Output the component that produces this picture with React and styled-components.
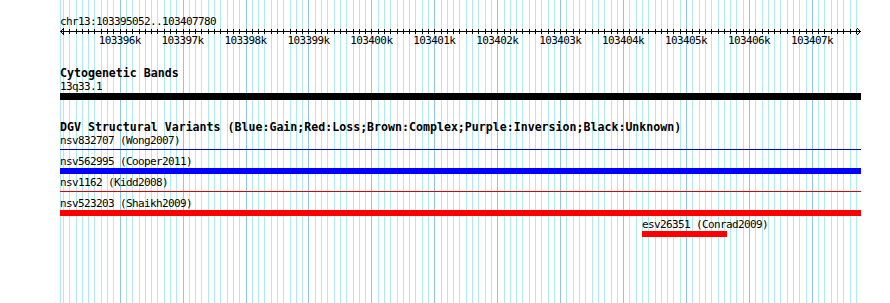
import React from 'react';
import styled, { createGlobalStyle } from 'styled-components';

const START = 103395052;
const END = 103407780;
const LEFT = 60;
const SPAN = 801;
const scale = SPAN / (END - START);
const offset = pos => (pos - START) * scale;

const GlobalStyle = createGlobalStyle`
  html, body {
    margin: 0;
    padding: 0;
    background: #fff;
  }
`;

const Panel = styled.div`
  position: relative;
  width: 890px;
  height: 303px;
  overflow: hidden;
  background: #fff;
`;

const GridLayer = styled.svg`
  position: absolute;
  top: 0;
  left: 0;
`;

const Content = styled.div`
  position: relative;
  display: flex;
  flex-direction: column;
  padding: 15px 0 0 ${LEFT}px;
  width: ${SPAN}px;
`;

const Label = styled.div`
  font-family: "DejaVu Sans Mono", "Liberation Mono", monospace;
  font-size: 11px;
  letter-spacing: -0.62px;
  height: 13px;
  line-height: 13px;
  color: #000;
  white-space: nowrap;
`;

const TrackTitle = styled.div`
  font-family: "DejaVu Sans Mono", "Liberation Mono", monospace;
  font-weight: bold;
  font-size: 11.6px;
  height: 13px;
  line-height: 13px;
  color: #000;
  white-space: nowrap;
`;

const RulerSvg = styled.svg`
  display: block;
  overflow: visible;
`;

const TickLabel = styled.text`
  font-family: "DejaVu Sans Mono", "Liberation Mono", monospace;
  font-size: 11px;
  letter-spacing: -0.62px;
  fill: #000;
`;

const Track = styled.section`
  display: flex;
  flex-direction: column;
  gap: 2px;
  margin-top: ${p => p.$gap}px;
`;

const Heading = styled.div`
  margin-bottom: -2px;
`;

const Row = styled.div`
  display: flex;
  flex-direction: column;
`;

const Glyph = styled.div`
  flex: none;
  background: ${p => p.$color};
  height: ${p => (p.$kind === 'line' ? 1 : p.$h)}px;
  margin-top: ${p => (p.$kind === 'line' ? 2 : 0)}px;
  margin-bottom: ${p => (p.$kind === 'line' ? 3 : 0)}px;
`;

const tracks = [
  {
    title: 'Cytogenetic Bands',
    gap: 19,
    features: [
      { name: '13q33.1', start: START, end: END, color: '#000', kind: 'bar', h: 7 },
    ],
  },
  {
    title: 'DGV Structural Variants (Blue:Gain;Red:Loss;Brown:Complex;Purple:Inversion;Black:Unknown)',
    gap: 21,
    features: [
      { name: 'nsv832707 (Wong2007)', start: START, end: END, color: '#0000c8', kind: 'line' },
      { name: 'nsv562995 (Cooper2011)', start: START, end: END, color: '#0000ff', kind: 'bar', h: 6 },
      { name: 'nsv1162 (Kidd2008)', start: START, end: END, color: '#d80000', kind: 'line' },
      { name: 'nsv523203 (Shaikh2009)', start: START, end: END, color: '#ff0000', kind: 'bar', h: 6 },
      { name: 'esv26351 (Conrad2009)', start: 103404300, end: 103405650, color: '#ff0000', kind: 'bar', h: 6 },
    ],
  },
];

function hundreds() {
  const out = [];
  for (let p = Math.ceil(START / 100) * 100; p <= END; p += 100) out.push(p);
  return out;
}

function Grid() {
  const lines = hundreds();
  return (
    <GridLayer width="890" height="303">
      <line x1={LEFT + 0.5} x2={LEFT + 0.5} y1="0" y2="303" stroke="#aeeaf0" />
      {lines.map(p => {
        const x = Math.round(LEFT + offset(p)) + 0.5;
        return (
          <line
            key={p}
            x1={x}
            x2={x}
            y1="0"
            y2="303"
            stroke={p % 1000 === 0 ? '#8ec6ea' : '#aeeaf0'}
          />
        );
      })}
    </GridLayer>
  );
}

function Ruler() {
  const ticks = hundreds();
  return (
    <RulerSvg width={SPAN + 1} height="20">
      <line x1="0" x2={SPAN} y1="3.5" y2="3.5" stroke="#000" />
      <polyline points="4,0 0.5,3.5 4,7" fill="none" stroke="#000" />
      <polyline points={`${SPAN - 4},0 ${SPAN - 0.5},3.5 ${SPAN - 4},7`} fill="none" stroke="#000" />
      {ticks.map(p => {
        const x = Math.round(offset(p)) + 0.5;
        return <line key={p} x1={x} x2={x} y1="1" y2="6" stroke="#000" />;
      })}
      {ticks
        .filter(p => p % 1000 === 0)
        .map(p => (
          <TickLabel key={p} x={offset(p)} y="16" textAnchor="middle">
            {p / 1000}k
          </TickLabel>
        ))}
    </RulerSvg>
  );
}

function Feature({ f }) {
  const left = offset(f.start);
  const width = offset(f.end) - left;
  return (
    <Row style={{ marginLeft: left }}>
      <Label>{f.name}</Label>
      <Glyph $color={f.color} $kind={f.kind} $h={f.h} style={{ width }} />
    </Row>
  );
}

export default function App() {
  return (
    <>
      <GlobalStyle />
      <Panel>
        <Grid />
        <Content>
          <Label>chr13:{START}..{END}</Label>
          <Ruler />
          {tracks.map(t => (
            <Track key={t.title} $gap={t.gap}>
              <Heading>
                <TrackTitle>{t.title}</TrackTitle>
              </Heading>
              {t.features.map(f => (
                <Feature key={f.name} f={f} />
              ))}
            </Track>
          ))}
        </Content>
      </Panel>
    </>
  );
}
